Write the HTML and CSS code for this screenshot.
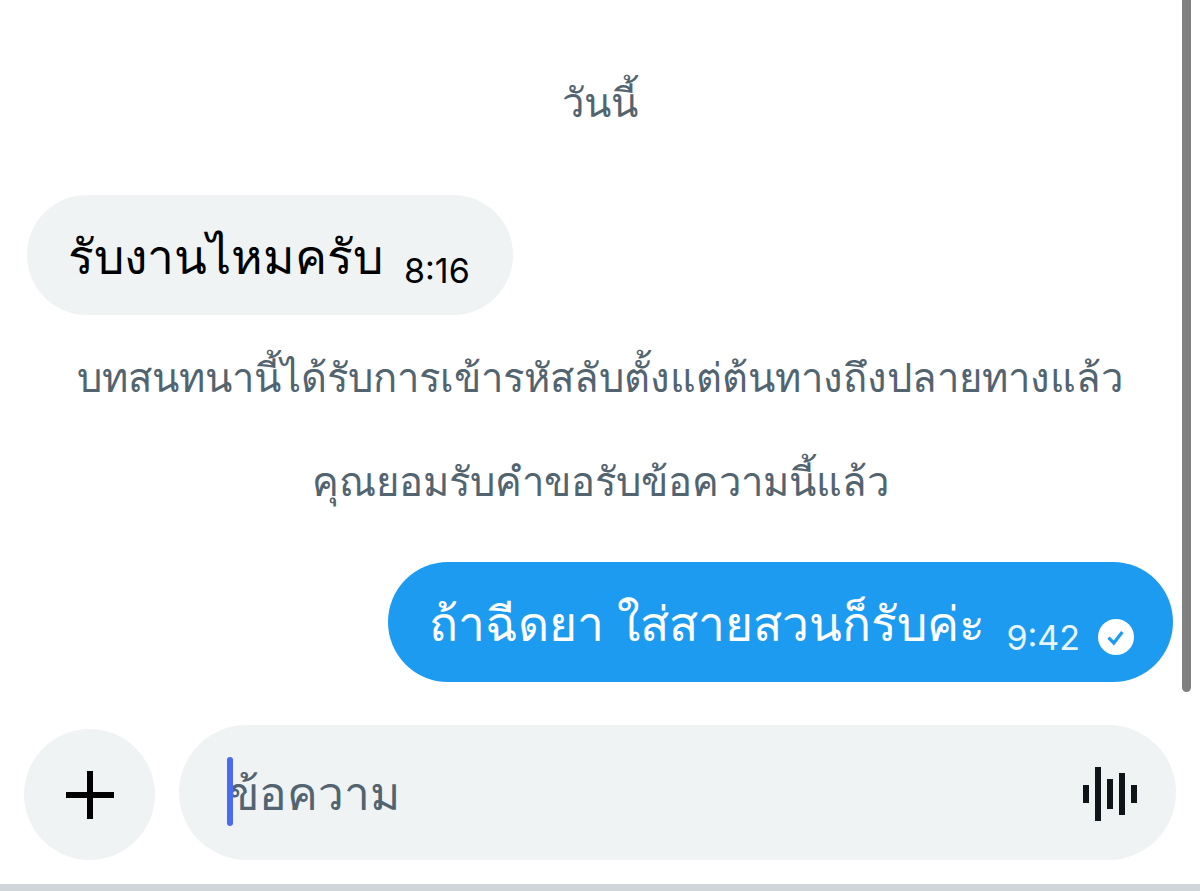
FILE: index.html
```html
<!DOCTYPE html>
<html lang="th">
<head>
<meta charset="utf-8">
<title>แชท</title>
<meta name="viewport" content="width=device-width, initial-scale=1">
<link rel="stylesheet" href="styles.css">
</head>
<body>
<div class="app">
  <main class="chat">
    <p class="note day">วันนี้</p>
    <div class="bubble incoming">
      <span class="text">รับงานไหมครับ</span>
      <time class="time">8:16</time>
    </div>
    <p class="note encrypted">บทสนทนานี้ได้รับการเข้ารหัสลับตั้งแต่ต้นทางถึงปลายทางแล้ว</p>
    <p class="note accepted">คุณยอมรับคำขอรับข้อความนี้แล้ว</p>
    <div class="bubble outgoing">
      <span class="text">ถ้าฉีดยา ใส่สายสวนก็รับค่ะ</span>
      <time class="time">9:42</time>
      <svg class="sent" viewBox="0 0 36 36" aria-hidden="true"><circle cx="18" cy="18" r="18" fill="#fff"/><path d="M10.500 18.700l5.300 5.300L24.300 13" fill="none" stroke="#1d9bf0" stroke-width="3.200"/></svg>
    </div>
  </main>
  <form class="composer">
    <button class="add" type="button" aria-label="เพิ่ม"><svg viewBox="0 0 50 50" aria-hidden="true"><path d="M25 1v48M1 25h48" stroke="#000" stroke-width="6"/></svg></button>
    <div class="field">
      <span class="caret"></span>
      <input class="message" type="text" placeholder="ข้อความ" aria-label="ข้อความ">
      <button class="voice" type="button" aria-label="ข้อความเสียง"><svg viewBox="0 0 56 56" aria-hidden="true"><path d="M4 19v18M16 1v54M28 13v30M40 7v42M52 19v18" stroke="#0f1419" stroke-width="6"/></svg></button>
    </div>
  </form>
  <div class="edge"></div>
  <div class="scrollbar"></div>
</div>
</body>
</html>
```
FILE: styles.css
```css
* { box-sizing: border-box; }
body {
  margin: 0;
  background: #fff;
  font-family: "Liberation Sans", "Noto Sans", sans-serif;
}
.app {
  position: relative;
  min-height: 100vh;
  display: flex;
  flex-direction: column;
}
.chat {
  flex: 1;
  display: flex;
  flex-direction: column;
  padding: 73px 27px 0;
}
.note {
  margin: 0;
  color: #536471;
  font-size: 40px;
  line-height: 60px;
  text-align: center;
  white-space: nowrap;
}
.day { margin-bottom: 62px; }
.encrypted { margin: 33px 0 44px; }
.accepted { margin-bottom: 50px; }
.bubble {
  display: flex;
  align-items: flex-end;
  min-height: 120px;
  border-radius: 60px;
  padding: 0 43px 17px 41px;
  white-space: nowrap;
}
.text { font-size: 48px; line-height: 80px; }
.time {
  margin: 0 0 7px 21px;
  font: 34px/40px Inter, sans-serif;
}
.incoming {
  align-self: flex-start;
  background: #eff3f4;
  color: #000;
}
.outgoing {
  align-self: flex-end;
  padding-right: 39px;
  background: #1d9bf0;
  color: #fff;
}
.outgoing .time { color: #e8f5fe; }
.sent { width: 36px; height: 36px; margin: 0 0 10px 18px; }
.composer {
  display: flex;
  align-items: flex-end;
  gap: 24px;
  padding: 0 24px 24px;
}
.add {
  width: 131px;
  height: 131px;
  flex: none;
  display: grid;
  place-items: center;
  border: 0;
  border-radius: 50%;
  background: #eff3f4;
}
.add svg { width: 50px; height: 50px; }
.field {
  position: relative;
  flex: 1;
  display: flex;
  align-items: center;
  height: 135px;
  border-radius: 68px;
  padding: 3px 38px 0 49px;
  background: #eff3f4;
}
.caret {
  position: absolute;
  left: 48px;
  top: 32px;
  width: 6px;
  height: 69px;
  border-radius: 3px;
  background: #4a6cf0;
}
.message {
  flex: 1;
  min-width: 0;
  border: 0;
  padding: 0;
  outline: 0;
  background: none;
  font: 46px/80px "Liberation Sans", sans-serif;
}
.message::placeholder { color: #536471; opacity: 1; }
.voice { border: 0; padding: 0; background: none; display: flex; }
.voice svg { width: 56px; height: 56px; }
.edge { height: 7px; background: #d0d5da; }
.scrollbar {
  position: absolute;
  top: 0;
  right: 9px;
  width: 9px;
  height: 692px;
  border-radius: 0 0 5px 5px;
  background: #808080;
}
```
